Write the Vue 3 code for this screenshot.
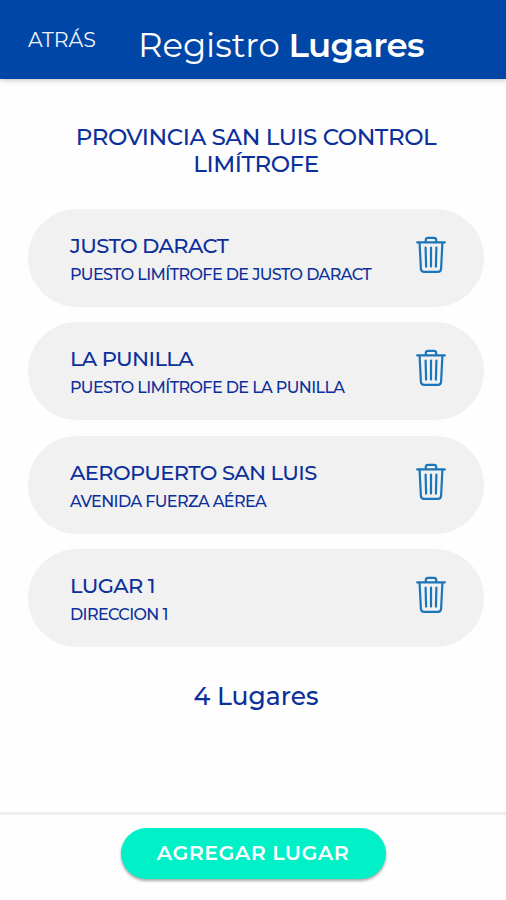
<template>
    <div class="page">
        <!-- header -->
        <header class="header">
            <button class="back">ATRÁS</button>
            <h1 class="title">Registro <span class="bold">Lugares</span></h1>
        </header>

        <main class="content">
            <h2 class="subtitle">PROVINCIA SAN LUIS CONTROL<br />LIMÍTROFE</h2>

            <!-- places -->
            <ul class="list">
                <li v-for="place in places" :key="place.id" class="card">
                    <div class="info">
                        <p class="name">{{ place.name }}</p>
                        <p class="address">{{ place.address }}</p>
                    </div>

                    <button class="trash" aria-label="Eliminar" @click="remove(place.id)">
                        <svg viewBox="0 0 30 38">
                            <path d="M1.2 6.4H28.8" />
                            <path d="M9.8 6V4Q9.8 1.9 12.2 1.9H17.8Q20.2 1.9 20.2 4V6" />
                            <path d="M3.6 7L4.9 32.8Q5.2 35.8 8.1 35.8H21.9Q24.8 35.8 25.1 32.8L26.4 7" />
                            <path d="M9.6 11.6L10.1 30.6M15 11.6V30.6M20.4 11.6L19.9 30.6" />
                        </svg>
                    </button>
                </li>
            </ul>

            <p class="count">{{ places.length }} Lugares</p>
        </main>

        <!-- footer -->
        <footer class="footer">
            <button class="btn">AGREGAR LUGAR</button>
        </footer>
    </div>
</template>

<script setup>
import { ref } from "vue";

const places = ref([
    { id: 1, name: "JUSTO DARACT", address: "PUESTO LIMÍTROFE DE JUSTO DARACT" },
    { id: 2, name: "LA PUNILLA", address: "PUESTO LIMÍTROFE DE LA PUNILLA" },
    { id: 3, name: "AEROPUERTO SAN LUIS", address: "AVENIDA FUERZA AÉREA" },
    { id: 4, name: "LUGAR 1", address: "DIRECCION 1" },
]);

const remove = (id) => {
    places.value = places.value.filter((place) => place.id !== id);
};
</script>

<style>
body {
    margin: 0;
    background: #fff;
}
</style>

<style scoped>
* {
    box-sizing: border-box;
}

.page {
    height: 900px;
    display: flex;
    flex-direction: column;
    overflow: hidden;
    background: #fefefe;
    color: #0b2f9b;
    font-family: Montserrat, Inter, sans-serif;
    white-space: nowrap;
}

button {
    padding: 0;
    border: none;
    background: none;
    font-family: inherit;
}

/* header */
.header {
    flex: none;
    display: flex;
    align-items: flex-start;
    height: 79px;
    padding-left: 28px;
    background: #0046a6;
    color: #fff;
    box-shadow: 0 1px 5px rgba(60, 40, 20, 0.3);
}

.back {
    width: 110px;
    padding-top: 28px;
    color: #f0f5fd;
    font-size: 20.5px;
    line-height: 24px;
    text-align: left;
}

.title {
    margin: 0;
    padding-top: 25px;
    font-size: 34px;
    line-height: 40px;
    font-weight: 400;
    letter-spacing: -0.1px;
}

.bold {
    font-weight: 600;
    letter-spacing: -0.7px;
}

/* content */
.content {
    flex: 1;
    padding: 45px 22px 0 28px;
}

.subtitle {
    margin: 0;
    font-size: 23px;
    line-height: 27px;
    font-weight: 500;
    letter-spacing: -0.45px;
    text-align: center;
}

.list {
    display: flex;
    flex-direction: column;
    gap: 15.6px;
    margin: 30.5px 0 0;
    padding: 0;
    list-style: none;
}

.card {
    display: flex;
    justify-content: space-between;
    height: 98.2px;
    padding: 24px 38.5px 0 42px;
    border-radius: 50px;
    background: #f1f1f1;
}

.card:last-child {
    margin-top: -1px;
}

.name {
    margin: 0;
    font-size: 21px;
    line-height: 26px;
    font-weight: 500;
    letter-spacing: -0.6px;
}

.address {
    margin: 6px 0 0;
    font-size: 16px;
    line-height: 20px;
    font-weight: 500;
    letter-spacing: -0.6px;
}

.trash {
    width: 30px;
    height: 38px;
    margin-top: 3px;
}

.trash svg {
    display: block;
    width: 30px;
    height: 38px;
    fill: none;
    stroke: #1b75b9;
    stroke-width: 2.2;
    stroke-linecap: round;
    stroke-linejoin: round;
}

.count {
    margin: 33px 0 0;
    font-size: 25px;
    line-height: 32px;
    font-weight: 500;
    text-align: center;
}

/* footer */
.footer {
    flex: none;
    display: flex;
    justify-content: center;
    align-items: flex-start;
    height: 88px;
    padding-top: 12.5px;
    border-top: 3px solid #efefef;
}

.btn {
    width: 265px;
    height: 51.5px;
    padding-bottom: 2px;
    border-radius: 26px;
    background: #00f0c8;
    color: #fff;
    font-size: 20.5px;
    font-weight: 600;
    letter-spacing: 0.5px;
    box-shadow: 0 2px 3px rgba(0, 0, 0, 0.35);
}
</style>
